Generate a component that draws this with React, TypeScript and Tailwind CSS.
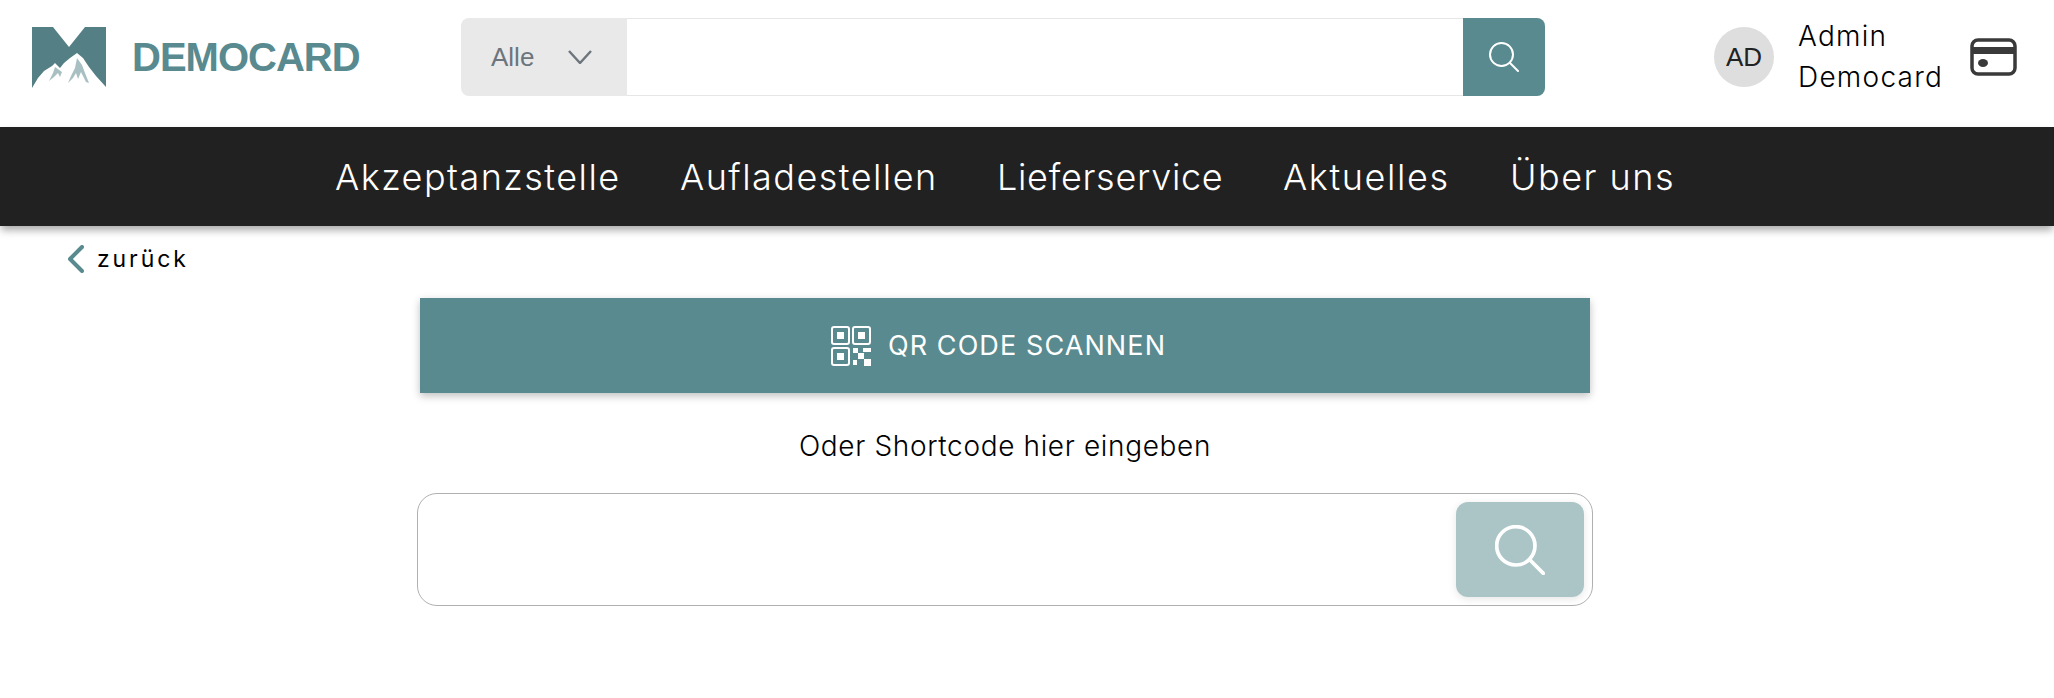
const font = "font-['Inter','Liberation_Sans',sans-serif]";
const navItems = [
  { label: "Akzeptanzstelle", className: "w-[285px] tracking-[1.45px]" },
  { label: "Aufladestellen", className: "w-[257px] tracking-[1.45px]" },
  { label: "Lieferservice", className: "w-[226px] tracking-[0.7px]" },
  { label: "Aktuelles", className: "w-[167px] tracking-[1.6px]" },
  { label: "Über uns", className: "w-[164px] tracking-[1.5px]" },
];

function Logo() {
  return (
    <svg width="74" height="61" viewBox="0 0 74 61" className="shrink-0">
      <path d="M0 0H21L37 20L53 0H74V61H0Z" fill="#547f85" />
      <path d="M0 61L6 51L12 44L20 39L23 36L28 41L32 36L38 31L45 26L51 31L57 40L64 49L74 60V61Z" fill="#fff" />
      <path d="M45 31L43 41L39 49L36 56L41 51L44 46L46 52L49 45L52 51L54 55L57 56L53 46L50 38Z" fill="#a9c0c3" />
      <path d="M23 40L21 46L17 54L22 50L26 46L28 50L30 45Z" fill="#a9c0c3" />
    </svg>
  );
}

function SearchIcon({ size, strokeWidth }: { size: number; strokeWidth: number }) {
  return (
    <svg width={size} height={size} viewBox="0 0 30 30" fill="none" stroke="#fff" strokeWidth={strokeWidth} strokeLinecap="round">
      <circle cx="12.5" cy="12.5" r="11.5" />
      <path d="M21 21L29 29" />
    </svg>
  );
}

function CardIcon() {
  return (
    <svg width="47" height="38" viewBox="0 0 47 38" fill="none">
      <rect x="2" y="2" width="43" height="34" rx="6" stroke="#3a3a3a" strokeWidth="3.5" />
      <rect x="3" y="9" width="41" height="7" fill="#3a3a3a" />
      <ellipse cx="13" cy="25" rx="5" ry="4" fill="#3a3a3a" />
    </svg>
  );
}

function QrIcon() {
  return (
    <svg width="40" height="40" viewBox="0 0 40 40" fill="none">
      <rect x="1" y="1" width="17" height="17" rx="2" stroke="#fff" strokeWidth="2" />
      <rect x="6" y="6" width="7" height="7" fill="#fff" />
      <rect x="22" y="1" width="17" height="17" rx="2" stroke="#fff" strokeWidth="2" />
      <rect x="27" y="6" width="7" height="7" fill="#fff" />
      <rect x="1" y="22" width="17" height="17" rx="2" stroke="#fff" strokeWidth="2" />
      <rect x="6" y="27" width="7" height="7" fill="#fff" />
      <path d="M22 22h5v5h-5zM32 22h8v4h-8zM27 27h6v6h-6zM22 34h4v5h-4zM33 33h7v7h-7z" fill="#fff" />
    </svg>
  );
}

export default function App() {
  return (
    <div className={`min-h-[698px] bg-white text-black ${font}`}>
      {/* Header */}
      <header className="flex h-[127px] items-center pb-[13px]">
        <div className="ml-8 flex w-[429px] items-center gap-[26px]">
          <Logo />
          <span className="font-['Liberation_Sans',sans-serif] text-[40px] font-bold leading-none tracking-[-1px] text-[#588a90]">
            DEMOCARD
          </span>
        </div>
        <div className="flex h-[78px] w-[1084px] items-stretch">
          <div className="flex w-[166px] items-center rounded-l-lg bg-[#e9e9e9] pl-[30px] text-[#6c757d]">
            <span className="font-['Liberation_Sans',sans-serif] text-[26px]">Alle</span>
            <svg width="24" height="14" viewBox="0 0 24 14" fill="none" stroke="currentColor" strokeWidth="2.4" className="ml-[34px]">
              <path d="M1 1L12 13L23 1" />
            </svg>
          </div>
          <div className="flex-1 border-y border-[#e6e6e6] bg-white" />
          <button className="flex w-[82px] items-center justify-center rounded-r-lg bg-[#588a90]">
            <SearchIcon size={30} strokeWidth={2} />
          </button>
        </div>
        <div className="ml-[169px] flex items-center">
          <div className="flex h-[60px] w-[60px] items-center justify-center rounded-full bg-[#dedede] font-['Liberation_Sans',sans-serif] text-[26px] text-[#222]">
            AD
          </div>
          <div className="ml-6 w-[172px] text-[28px] font-light leading-[41px] tracking-[1.25px]">
            <div>Admin</div>
            <div>Democard</div>
          </div>
          <CardIcon />
        </div>
      </header>

      {/* Nav */}
      <nav className="flex h-[99px] items-center gap-[60px] bg-[#212121] pl-[335px] text-white shadow-[0_5px_8px_-1px_rgba(0,0,0,0.35)]">
        {navItems.map((item) => (
          <a key={item.label} className={`${item.className} whitespace-nowrap text-[36px] font-light`}>
            {item.label}
          </a>
        ))}
      </nav>

      {/* Back */}
      <div className="ml-[68px] mt-[19px] flex h-[28px] items-center">
        <svg width="16" height="28" viewBox="0 0 16 28" fill="none" stroke="#588a90" strokeWidth="4" strokeLinecap="round" strokeLinejoin="round">
          <path d="M14 2L2 14L14 26" />
        </svg>
        <span className="ml-[13px] text-[23px] font-normal tracking-[2.9px]">zurück</span>
      </div>

      {/* Main */}
      <main className="ml-[417px] mt-[25px] w-[1176px]">
        <button className="mx-[3px] flex h-[95px] w-[1170px] items-center justify-center gap-[17px] bg-[#588a90] pr-[13px] text-white shadow-[0_3px_8px_rgba(0,0,0,0.25)]">
          <QrIcon />
          <span className="mt-[2px] text-[27px] font-normal tracking-[1.1px]">QR CODE SCANNEN</span>
        </button>
        <p className="mt-[34px] text-center text-[28px] font-light leading-[38px] tracking-[0.65px]">
          Oder Shortcode hier eingeben
        </p>
        <div className="mt-[28px] flex h-[113px] items-center justify-end rounded-[20px] border border-[#b0b0b0] pr-2">
          <button className="flex h-[95px] w-[128px] items-center justify-center rounded-xl bg-[#abc5c6] shadow-[0_2px_8px_rgba(0,0,0,0.1)]">
            <SearchIcon size={50} strokeWidth={2.2} />
          </button>
        </div>
      </main>
    </div>
  );
}
